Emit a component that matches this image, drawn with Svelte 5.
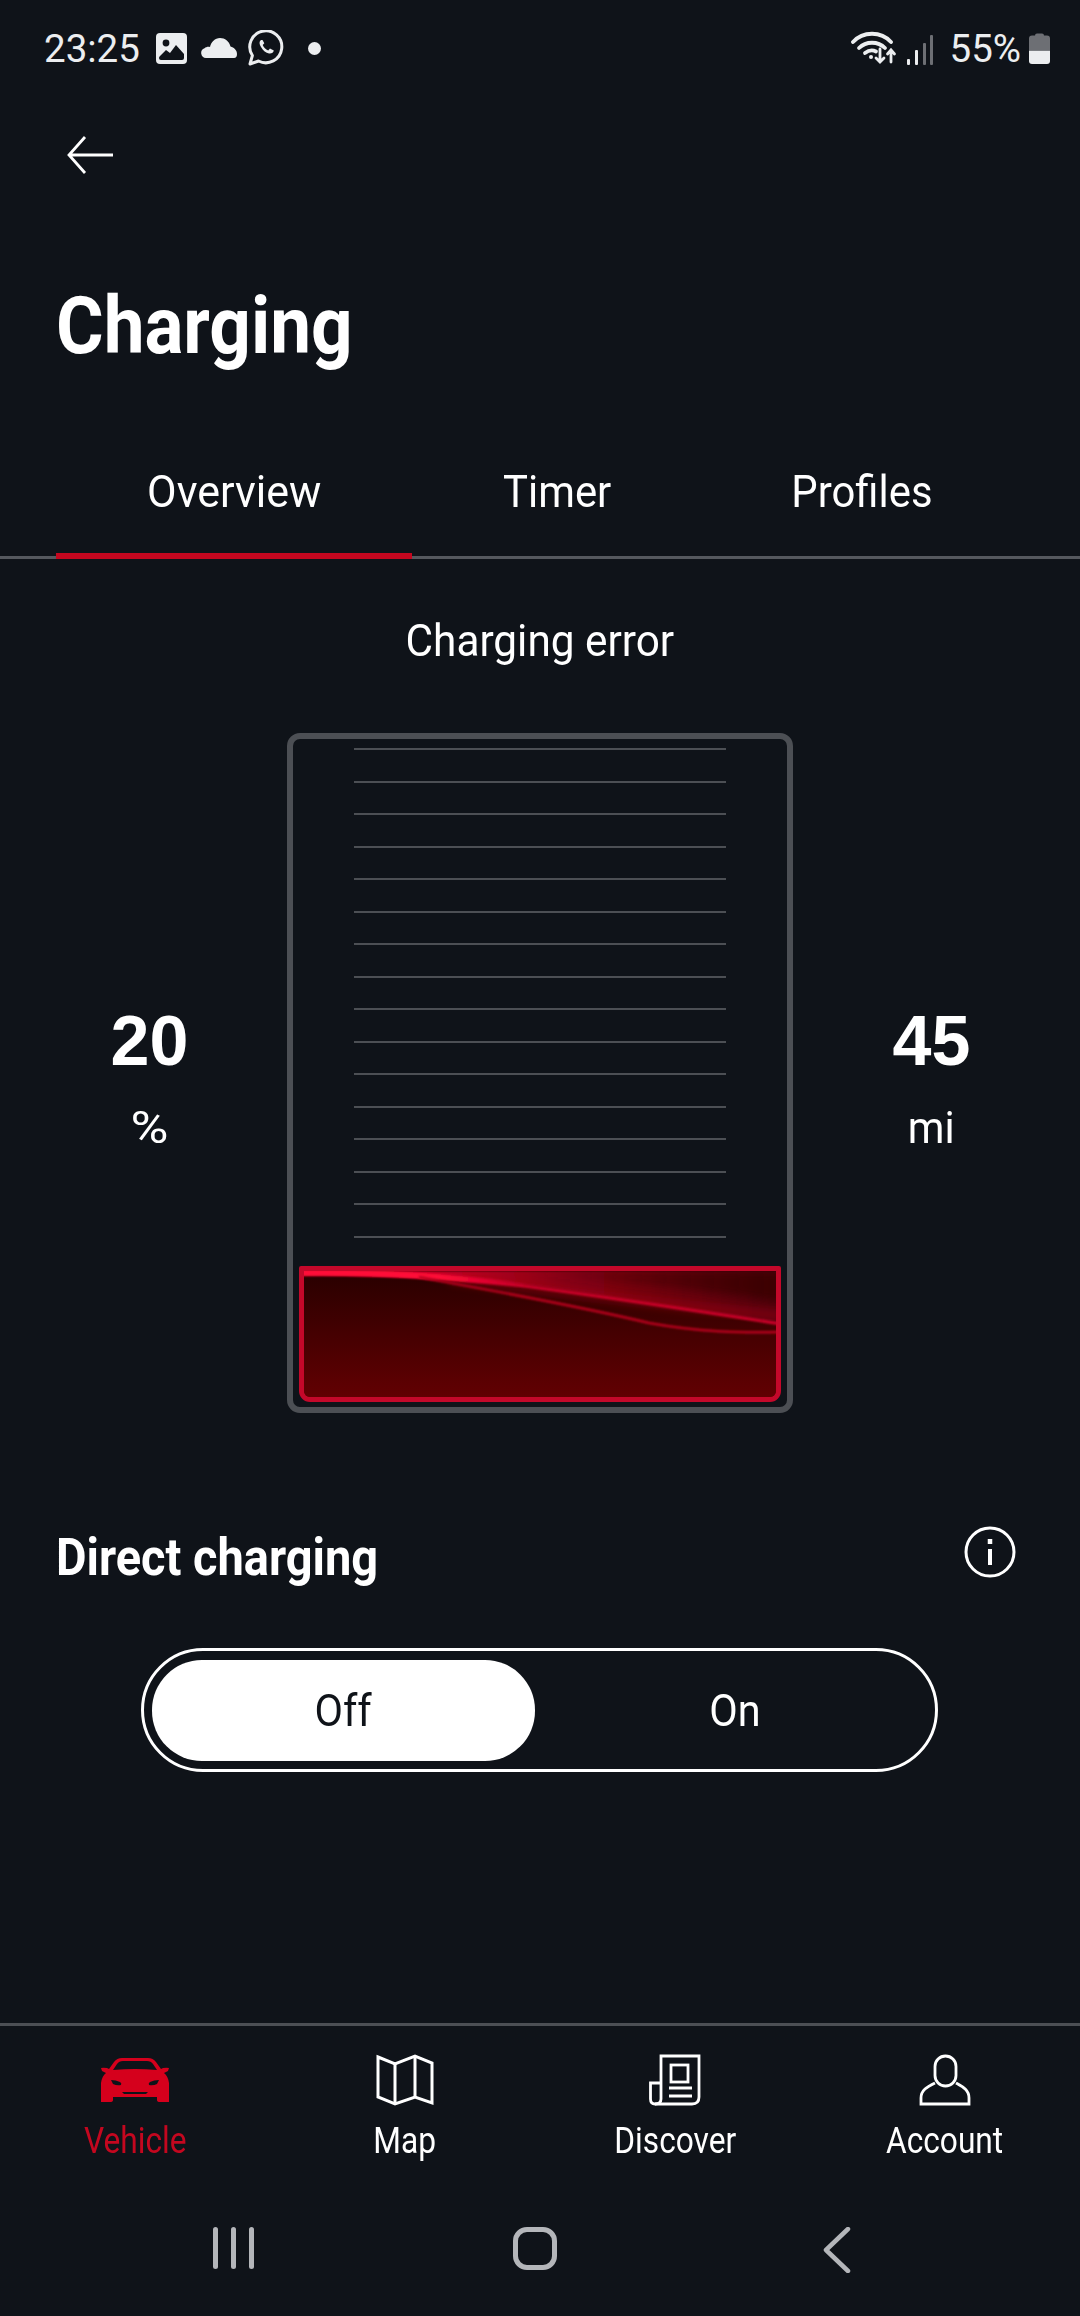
<script lang="ts">
	const tabs = ["Overview", "Timer", "Profiles"];
	const gridLines = Array.from({ length: 16 }, (_, i) => i);
	const navItems = ["Vehicle", "Map", "Discover", "Account"];
</script>

<div class="screen">
	<div class="status">
		<span class="clock">23:25</span>
		<svg class="st-img" width="31" height="31" viewBox="0 0 31 31">
			<rect width="31" height="31" rx="4" fill="#eceef0" />
			<circle cx="10" cy="10" r="3.4" fill="#0f1319" />
			<path d="M3 25q0-1 1-2l6-6 4 3 6-8 8 9v4q0 2-2 2H5q-2 0-2-2z" fill="#0f1319" />
		</svg>
		<svg class="st-cloud" width="36" height="20" viewBox="0 0 36 20">
			<path d="M5 20a5 5 0 0 1-1.500-9.700C5 9 7 8.500 9 9c1-5 5-9 10-9 5 0 9 3 10.500 8.500C33 9.500 36 12 36 16q0 4-3 4z" fill="#eceef0" />
		</svg>
		<svg class="st-wa" width="37" height="36" viewBox="0 0 37 36" fill="none">
			<path d="M2 34l2.400-8.500A16 16 0 1 1 10.500 31z" stroke="#eceef0" stroke-width="3" stroke-linejoin="round" />
			<path d="M13 10c-2 1.500-2 4 0 7 2 3.500 5 6 8 6.500 2.500.5 4.500-1 4.800-3l-3.800-2-1.800 2c-2.500-1-4.500-3-5.500-5.500l1.600-1.800L14.500 10z" fill="#eceef0" />
		</svg>
		<span class="st-dot"></span>
		<span class="spacer"></span>
		<svg class="st-wifi" width="46" height="34" viewBox="0 0 46 34" fill="none" stroke="#eceef0" stroke-linecap="round" stroke-width="3.800">
			<path d="M2 11c10-11 28-11 38 0" />
			<path d="M8 17c7-7 19-7 26 0" />
			<path d="M14 22c4-3 8-3 11-1.500" />
			<circle cx="20" cy="26" r="2" fill="#eceef0" stroke="none" />
			<path d="M29 18v13M25 27l4 4 4-4" stroke-width="2.800" />
			<path d="M40 31V20M36.500 23l3.500-4 3.500 4" stroke-width="2.800" />
		</svg>
		<svg class="st-signal" width="27" height="30" viewBox="0 0 27 30">
			<rect x="0" y="24" width="3" height="6" rx="1" fill="#eceef0" />
			<rect x="8" y="15" width="3" height="15" rx="1" fill="#eceef0" />
			<rect x="16" y="8" width="3" height="22" rx="1" fill="#6d6f74" />
			<rect x="23" y="0" width="3" height="30" rx="1" fill="#6d6f74" />
		</svg>
		<span class="pct">55%</span>
		<svg class="st-batt" width="21" height="31" viewBox="0 0 21 31">
			<path d="M6 2.500q0-2 2-2h5q2 0 2 2h3q3 0 3 3V17H0V5.500q0-3 3-3z" fill="#6d6f74" />
			<path d="M0 17.500h21V28q0 3-3 3H3q-3 0-3-3z" fill="#eceef0" />
		</svg>
	</div>

	<div class="back-row">
		<svg width="46" height="38" viewBox="0 0 46 38" fill="none" stroke="#fff" stroke-width="2.800">
			<path d="M46 19H2M18 1 2 19l16 18" />
		</svg>
	</div>

	<h1><span>Charging</span></h1>

	<div class="tabs">
		{#each tabs as tab, i}
			<div class="tab" class:active={i === 0}><span>{tab}</span></div>
		{/each}
	</div>

	<div class="state"><span>Charging error</span></div>

	<div class="battery-row">
		<div class="stat left">
			<div class="num">20</div>
			<div class="unit"><span class="percent">%</span></div>
		</div>
		<div class="battery">
			<div class="lines">
				{#each gridLines as l}
					<div class="line"></div>
				{/each}
			</div>
			<div class="fill">
				<svg width="482" height="136" viewBox="0 0 482 136" preserveAspectRatio="none">
					<defs>
						<linearGradient id="body" x1="0" y1="0" x2="0" y2="1">
							<stop offset="0" stop-color="#260000" />
							<stop offset="1" stop-color="#640002" />
						</linearGradient>
						<linearGradient id="sheen" x1="0" y1="0" x2="1" y2="0">
							<stop offset="0.15" stop-color="#e0002a" />
							<stop offset="0.55" stop-color="#8a0014" />
							<stop offset="1" stop-color="#520008" />
						</linearGradient>
						<linearGradient id="fade" x1="0" y1="0" x2="1" y2="0">
							<stop offset="0.35" stop-color="#3a0000" stop-opacity="0" />
							<stop offset="1" stop-color="#3a0000" stop-opacity=".95" />
						</linearGradient>
						<linearGradient id="hot" x1="0" y1="0" x2="1" y2="0">
							<stop offset="0" stop-color="#ff0a38" />
							<stop offset="0.6" stop-color="#ff0a38" />
							<stop offset="1" stop-color="#ff0a38" stop-opacity="0" />
						</linearGradient>
						<filter id="soft"><feGaussianBlur stdDeviation="1.200" /></filter>
						<filter id="wide"><feGaussianBlur stdDeviation="4" /></filter>
					</defs>
					<rect width="482" height="136" fill="url(#body)" />
					<path d="M0 5H482V58C400 44 320 32 240 21 170 13 90 9 0 9Z" fill="url(#sheen)" filter="url(#soft)" />
					<path d="M100 5H482V36C400 24 280 10 100 5Z" fill="url(#fade)" filter="url(#wide)" />
					<path d="M150 13C230 24 320 34 482 50" fill="none" stroke="#a80018" stroke-width="7" opacity=".55" filter="url(#wide)" />
					<path d="M0 7C90 7 170 12 240 22 320 33 400 45 482 58" fill="none" stroke="#d0002a" stroke-width="3" filter="url(#soft)" />
					<path d="M0 7C60 6 130 8 230 20" fill="none" stroke="url(#hot)" stroke-width="6" filter="url(#soft)" />
					<path d="M120 11C200 26 280 40 350 57 400 66 440 67 482 66" fill="none" stroke="#b8001f" stroke-width="2.500" filter="url(#soft)" />
				</svg>
			</div>
		</div>
		<div class="stat right">
			<div class="num">45</div>
			<div class="unit"><span>mi</span></div>
		</div>
	</div>

	<div class="direct">
		<h2><span>Direct charging</span></h2>
		<svg width="52" height="52" viewBox="0 0 52 52" fill="none" stroke="#fff" stroke-width="3">
			<circle cx="26" cy="26" r="24" />
			<path d="M26 23v16" stroke-width="4" />
			<path d="M26 13v5" stroke-width="4.500" />
		</svg>
	</div>

	<div class="toggle">
		<div class="opt on"><span>Off</span></div>
		<div class="opt off"><span>On</span></div>
	</div>

	<div class="grow"></div>

	<nav class="bottom">
		{#each navItems as item, i}
			<div class="nav-item" class:current={i === 0}>
				<div class="nav-icon">
					{#if i === 0}
						<svg width="70" height="44" viewBox="0 0 70 44">
							<path fill="#d5001c" fill-rule="evenodd" d="M22 0h26q5 0 8 4l5 7 2-1q4-.5 6 0l-1 3-4 2q4 3 5 10v19h-9q-3 0-3-2v-3H13v3q0 2-3 2H1V25q1-7 5-10l-4-2-1-3q2-.5 6 0l2 1 5-7q3-4 8-4zm1 3q-4 0-6 3l-4 6q22-2 44 0l-4-6q-2-3-6-3zM11 22l2 4q4 2 8 1 1-2-1-3-4-2-9-2zm48 0q-5 0-9 2-2 1-1 3 4 1 8-1zM22 34l2 2h22l2-2z" />
						</svg>
					{:else if i === 1}
						<svg width="58" height="52" viewBox="0 0 58 52" fill="none" stroke="#fff" stroke-width="3" stroke-linejoin="miter">
							<path d="M2 3 19 10 39 2 56 9V49L39 43 19 50 2 43Z" />
							<path d="M19 10V50M39 2V43" />
						</svg>
					{:else if i === 2}
						<svg width="52" height="52" viewBox="0 0 52 52" fill="none" stroke="#fff" stroke-width="2.800">
							<path d="M12 40V2H50V43Q50 50 43 50H6Q1.500 50 1.500 45V29H12" />
							<path d="M12 40V45Q12 50 6 50" />
							<rect x="22" y="11" width="17" height="17" />
							<path d="M20 34H43M20 42H43" />
						</svg>
					{:else}
						<svg width="52" height="52" viewBox="0 0 52 52" fill="none" stroke="#fff" stroke-width="2.800">
							<rect x="16" y="2" width="21" height="30" rx="10.500" />
							<path d="M16 29C8 33 2 36 2 44V50H50V44C50 36 44 33 37 29" />
						</svg>
					{/if}
				</div>
				<div class="nav-label"><span>{item}</span></div>
			</div>
		{/each}
	</nav>

	<div class="sysnav">
		<div class="sys"><div class="bars"><i></i><i></i><i></i></div></div>
		<div class="sys"><div class="home"></div></div>
		<div class="sys">
			<svg width="28" height="46" viewBox="0 0 28 46" fill="none" stroke="#b4b6ba" stroke-width="4.500" stroke-linecap="round" stroke-linejoin="round">
				<path d="M25 2 3 23l22 21" />
			</svg>
		</div>
	</div>
</div>

<style>
	:global(body) {
		background: #0f1319;
	}
	.screen {
		width: 1080px;
		height: 2316px;
		background: #0f1319;
		color: #fff;
		display: flex;
		flex-direction: column;
		font-family: Roboto, "Liberation Sans", sans-serif;
		overflow: hidden;
	}
	span {
		display: inline-block;
	}
	.status {
		height: 96px;
		padding: 0 30px 0 44px;
		display: flex;
		align-items: center;
		color: #eceef0;
		font-size: 38.500px;
		flex-shrink: 0;
	}
	.st-img {
		margin-left: 16px;
	}
	.st-cloud {
		margin-left: 14px;
	}
	.st-wa {
		margin-left: 11px;
	}
	.st-dot {
		width: 13px;
		height: 13px;
		border-radius: 50%;
		background: #eceef0;
		margin-left: 23px;
	}
	.spacer {
		flex: 1;
	}
	.st-signal {
		margin-left: 10px;
		margin-top: 3px;
	}
	.pct {
		margin-left: 16px;
	}
	.st-batt {
		margin-left: 8px;
	}
	.back-row {
		height: 117px;
		padding-left: 67px;
		display: flex;
		align-items: center;
	}
	h1 {
		margin: 65px 0 0 56px;
		font-size: 80px;
		line-height: 96px;
		font-weight: 700;
	}
	h1 span {
		transform: scaleX(0.91);
		transform-origin: left;
	}
	.tabs {
		margin-top: 90px;
		padding-left: 56px;
		display: grid;
		grid-template-columns: 356px 290px 320px;
		height: 95px;
		border-bottom: 3px solid #55585e;
		box-sizing: border-box;
	}
	.tab {
		text-align: center;
		font-size: 45px;
		line-height: 56px;
		height: 95px;
		box-sizing: border-box;
	}
	.tab span {
		transform: scaleX(0.93);
	}
	.tab.active span {
		transform: scaleX(0.955);
	}
	.state span {
		transform: scaleX(0.94);
	}
	.opt span {
		transform: scaleX(0.92);
	}
	.tab.active {
		border-bottom: 6px solid #c4071f;
	}
	.state {
		text-align: center;
		font-size: 45px;
		line-height: 56px;
		margin-top: 54px;
	}
	.battery-row {
		margin-top: 64px;
		display: grid;
		grid-template-columns: 1fr 506px 1fr;
	}
	.stat {
		display: flex;
		flex-direction: column;
		align-items: center;
		justify-content: center;
		padding-top: 10px;
	}
	.stat.left {
		padding-left: 12px;
	}
	.stat.right {
		padding-right: 10px;
	}
	.num {
		font-family: "Liberation Sans", sans-serif;
		font-weight: 700;
		font-size: 70px;
		line-height: 80px;
	}
	.unit {
		font-size: 45px;
		line-height: 56px;
		margin-top: 19px;
	}
	.unit span {
		transform: scaleX(0.93);
	}
	.unit span.percent {
		transform: scaleX(1.15);
	}
	.battery {
		height: 680px;
		box-sizing: border-box;
		border: 6px solid #4c4f54;
		border-radius: 13px;
		padding: 9px 6px 5px;
		display: flex;
		flex-direction: column;
	}
	.lines {
		padding: 0 55px;
		display: flex;
		flex-direction: column;
		gap: 30.500px;
	}
	.line {
		height: 2px;
		background: #4c4f54;
	}
	.fill {
		margin-top: auto;
		height: 136px;
		box-sizing: border-box;
		border: 5px solid #c4082a;
		border-radius: 2px 2px 11px 11px;
		overflow: hidden;
		position: relative;
		background: #640002;
	}
	.fill svg {
		position: absolute;
		left: -5px;
		top: -5px;
	}
	.direct {
		margin-top: 113px;
		padding: 0 64px 0 56px;
		display: flex;
		justify-content: space-between;
		align-items: flex-start;
	}
	h2 {
		margin: 0;
		font-size: 52px;
		line-height: 64px;
		font-weight: 700;
	}
	h2 span {
		transform: scaleX(0.903);
		transform-origin: left;
	}
	.toggle {
		margin: 58px 0 0 141px;
		width: 797px;
		height: 124px;
		box-sizing: border-box;
		border: 3px solid #fff;
		border-radius: 62px;
		padding: 9px 8px;
		display: grid;
		grid-template-columns: 383px 1fr;
	}
	.opt {
		text-align: center;
		font-size: 45px;
		line-height: 101px;
		height: 101px;
		border-radius: 50px;
	}
	.opt.on {
		background: #fff;
		color: #0f1319;
	}
	.opt.off {
		padding-left: 8px;
	}
	.grow {
		flex: 1;
	}
	.bottom {
		border-top: 3px solid #4c4f54;
		height: 166px;
		box-sizing: border-box;
		display: grid;
		grid-template-columns: repeat(4, 1fr);
	}
	.nav-item {
		display: flex;
		flex-direction: column;
		align-items: center;
		padding-top: 28px;
	}
	.nav-icon {
		height: 52px;
		display: flex;
		align-items: center;
	}
	.nav-label {
		font-size: 36px;
		line-height: 44px;
		margin-top: 13px;
	}
	.nav-label span {
		transform: scaleX(0.88);
	}
	.current .nav-label {
		color: #c4071f;
	}
	.sysnav {
		height: 127px;
		padding: 0 92px 0 82px;
		display: grid;
		grid-template-columns: repeat(3, 1fr);
	}
	.sys {
		display: flex;
		justify-content: center;
		padding-top: 38px;
	}
	.bars {
		display: flex;
		gap: 13px;
		height: 42px;
	}
	.bars i {
		display: block;
		width: 5px;
		height: 42px;
		border-radius: 3px;
		background: #b4b6ba;
	}
	.home {
		width: 44px;
		height: 43px;
		box-sizing: border-box;
		border: 5px solid #b4b6ba;
		border-radius: 14px;
	}
</style>
